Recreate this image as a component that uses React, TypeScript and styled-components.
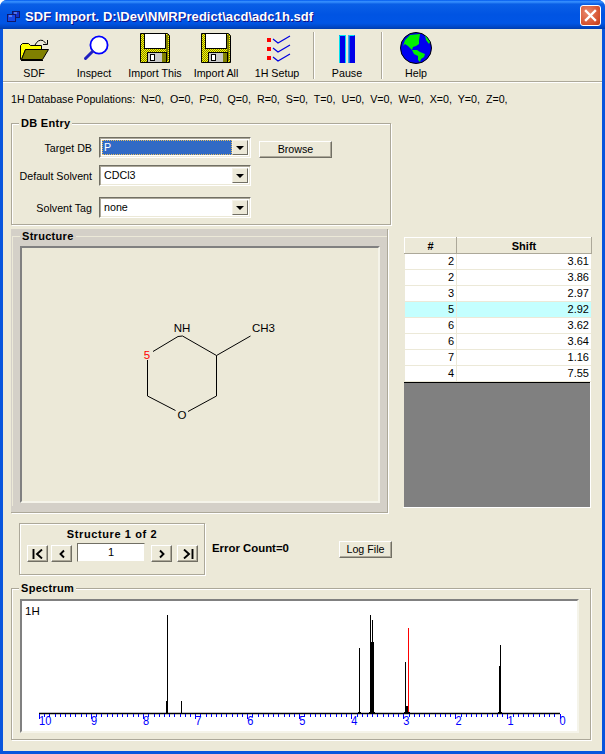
import React from 'react';
import styled, { createGlobalStyle } from 'styled-components';

const GlobalStyle = createGlobalStyle`
  html, body {
    margin: 0;
    padding: 0;
    background: #fff;
  }
  body {
    font-family: "Liberation Sans", Arial, sans-serif;
    font-size: 10.7px;
    color: #000;
  }
  * { box-sizing: border-box; }
`;

const rows = [
  { n: 2, shift: '3.61' },
  { n: 2, shift: '3.86' },
  { n: 3, shift: '2.97' },
  { n: 5, shift: '2.92', active: true },
  { n: 6, shift: '3.62' },
  { n: 6, shift: '3.64' },
  { n: 7, shift: '1.16' },
  { n: 4, shift: '7.55' },
];

const tools = [
  { label: 'SDF', icon: <FolderIcon />, width: 60 },
  { label: 'Inspect', icon: <LensIcon />, width: 60 },
  { label: 'Import This', icon: <DiskIcon />, width: 62 },
  { label: 'Import All', icon: <DiskIcon />, width: 60 },
  { label: '1H Setup', icon: <ChecksIcon />, width: 62 },
];

const ppmToX = (ppm: number) => 537.5 - ppm * 52.05;

export default function App() {
  return (
    <>
      <GlobalStyle />
      <Win>
        <TitleBar>
          <svg width="13" height="11" viewBox="0 0 13 11">
            <rect x="5.5" y="0.5" width="7" height="6" fill="#1030d0" stroke="#10186a" />
            <rect x="0.5" y="3.5" width="8" height="7" fill="#1848e8" stroke="#10186a" />
            <path d="M2 5h3M7 2h3" stroke="#9ab4f4" />
          </svg>
          <TitleText>SDF Import. D:\Dev\NMRPredict\acd\adc1h.sdf</TitleText>
          <CloseBtn>
            <svg width="13" height="13" viewBox="0 0 13 13">
              <path d="M2 2 L11 11 M11 2 L2 11" stroke="#fff" strokeWidth="2.4" strokeLinecap="square" />
            </svg>
          </CloseBtn>
        </TitleBar>
        <Client>
          <Toolbar>
            {tools.map((t) => (
              <ToolBtn key={t.label} $w={t.width}>
                {t.icon}
                <span>{t.label}</span>
              </ToolBtn>
            ))}
            <ToolSep $ml={5} />
            <ToolBtn $w={64}>
              <PauseIcon />
              <span>Pause</span>
            </ToolBtn>
            <ToolSep $ml={2} />
            <ToolBtn $w={66}>
              <GlobeIcon />
              <span>Help</span>
            </ToolBtn>
          </Toolbar>

          <PopLine>
            1H Database Populations:&nbsp; N=0,&nbsp; O=0,&nbsp; P=0,&nbsp; Q=0,&nbsp; R=0,&nbsp; S=0,&nbsp; T=0,&nbsp; U=0,&nbsp; V=0,&nbsp; W=0,&nbsp; X=0,&nbsp; Y=0,&nbsp; Z=0,
          </PopLine>

          <Upper>
            <LeftCol>
              <DbGroup>
                <Legend>DB Entry</Legend>
                <FormRow $mb={7}>
                  <FieldLabel>Target DB</FieldLabel>
                  <Combo>
                    <ComboValue $selected>P</ComboValue>
                    <ComboArrow />
                  </Combo>
                  <Browse>Browse</Browse>
                </FormRow>
                <FormRow $mb={11}>
                  <FieldLabel>Default Solvent</FieldLabel>
                  <Combo>
                    <ComboValue>CDCl3</ComboValue>
                    <ComboArrow />
                  </Combo>
                </FormRow>
                <FormRow $mb={0}>
                  <FieldLabel>Solvent Tag</FieldLabel>
                  <Combo>
                    <ComboValue>none</ComboValue>
                    <ComboArrow />
                  </Combo>
                </FormRow>
              </DbGroup>

              <StructFrame>
                <StructGroup>
                  <Legend $grey>Structure</Legend>
                  <StructPanel>
                    <svg width="356" height="253" viewBox="22 248 356 253">
                      <g stroke="#000" strokeWidth="1" fill="none">
                        <path d="M178 336.5 L182.5 336 L216.5 355.5 L216.5 396 L188 411.5" />
                        <path d="M216.5 355.5 L250.5 336" />
                        <path d="M175.5 410.5 L147.5 396 L147.5 360" />
                        <path d="M153 351.5 L178 336.5" />
                      </g>
                      <MolText x="182" y="332" textAnchor="middle">NH</MolText>
                      <MolText x="252" y="332">CH3</MolText>
                      <MolText x="182" y="419" textAnchor="middle">O</MolText>
                      <MolText x="147" y="359" textAnchor="middle" $red>5</MolText>
                    </svg>
                  </StructPanel>
                </StructGroup>
              </StructFrame>
            </LeftCol>

            <GridBox>
              <ShiftTable>
                <colgroup>
                  <col width="52" />
                  <col width="135" />
                </colgroup>
                <thead>
                  <tr>
                    <HeadCell>#</HeadCell>
                    <HeadCell>Shift</HeadCell>
                  </tr>
                </thead>
                <tbody>
                  {rows.map((r, i) => (
                    <BodyRow key={i} $active={r.active}>
                      <BodyCell>{r.n}</BodyCell>
                      <BodyCell>{r.shift}</BodyCell>
                    </BodyRow>
                  ))}
                </tbody>
              </ShiftTable>
              <GridEmpty />
            </GridBox>
          </Upper>

          <NavRow>
            <NavGroup>
              <NavTitle>Structure 1 of 2</NavTitle>
              <NavControls>
                <NavBtn $mr={3}>
                  <svg width="12" height="10" viewBox="0 0 12 10"><path d="M1.5 0V10M10 .5L5 5L10 9.5" stroke="#000" strokeWidth="1.9" fill="none" /></svg>
                </NavBtn>
                <NavBtn $mr={5}>
                  <svg width="12" height="10" viewBox="0 0 12 10"><path d="M8 1.5L4.5 5L8 8.5" stroke="#000" strokeWidth="1.9" fill="none" /></svg>
                </NavBtn>
                <NavInput>1</NavInput>
                <NavBtn $mr={5}>
                  <svg width="12" height="10" viewBox="0 0 12 10"><path d="M4 1.5L7.5 5L4 8.5" stroke="#000" strokeWidth="1.9" fill="none" /></svg>
                </NavBtn>
                <NavBtn $mr={0}>
                  <svg width="12" height="10" viewBox="0 0 12 10"><path d="M10.5 0V10M2 .5L7 5L2 9.5" stroke="#000" strokeWidth="1.9" fill="none" /></svg>
                </NavBtn>
              </NavControls>
            </NavGroup>
            <ErrorCount>Error Count=0</ErrorCount>
            <LogBtn>Log File</LogBtn>
          </NavRow>

          <SpecGroup>
            <Legend>Spectrum</Legend>
            <SpecPanel>
              <SpecChart />
            </SpecPanel>
          </SpecGroup>
        </Client>
      </Win>
    </>
  );
}

function SpecChart() {
  const ticks = [];
  for (let i = 0; i <= 100; i += 1) {
    const x = Math.round(ppmToX(i / 10)) + 0.5;
    ticks.push(<line key={i} x1={x} x2={x} y1={113} y2={i % 10 === 0 ? 118 : 116} stroke="#00f" />);
  }
  const labels = [10, 9, 8, 7, 6, 5, 4, 3, 2, 1, 0];
  // panel inner top-left sits at (22, 601) on the page
  const peaks: [number, number, string?][] = [
    [144.5, 100], [145.5, 14], [159.5, 100],
    [337.5, 47], [348.5, 14], [350.5, 19], [349.5, 41], [351.5, 41],
    [383.5, 61], [384.5, 105], [385.5, 105], [386.5, 27, '#f00'],
    [478.5, 44], [477.5, 65],
  ];
  return (
    <svg width="555" height="130" viewBox="0 0 555 130">
      <SpecLabel x="3" y="14">1H</SpecLabel>
      {peaks.map(([x, top, color], i) => (
        <line key={i} x1={x} x2={x} y1={top} y2={112} stroke={color ?? '#000'} />
      ))}
      <path d="M336 111.5h3M347 111.5h6M382 111.5h6M476 111.5h4" stroke="#000" />
      <line x1={17} x2={538} y1={112.5} y2={112.5} stroke="#000" strokeWidth="1.4" />
      {ticks}
      {labels.map((n) => (
        <AxisLabel key={n} transform={`translate(${ppmToX(n)},124) scale(0.85,1)`}>{n}</AxisLabel>
      ))}
    </svg>
  );
}

function FolderIcon() {
  return (
    <Ico viewBox="0 0 32 32">
      <path d="M2.5 27.5 V13.5 L4.5 11.5 H10.5 L12.5 13.5 H23.5 V17.5 H7.5 L3.5 27.5 Z" fill="#ffff00" stroke="#000" />
      <path d="M3.5 27.5 L7.5 17.5 H30.5 L24.5 27.5 Z" fill="#808000" stroke="#000" />
      <path d="M3 28.5 H25" stroke="#000" />
      <path d="M17 13 Q20 7 25 8.5 L28 11.5" stroke="#000" fill="none" />
      <path d="M29.5 8 V12.5 H25" stroke="#000" fill="none" />
    </Ico>
  );
}

function LensIcon() {
  return (
    <Ico viewBox="0 0 32 32">
      <circle cx="21" cy="13" r="8.6" fill="#fff" stroke="#0000ff" strokeWidth="1.8" />
      <path d="M14.5 19.5 L7.5 26.5" stroke="#2020c0" strokeWidth="3" strokeLinecap="round" />
    </Ico>
  );
}

function DiskIcon() {
  return (
    <Ico viewBox="0 0 32 32">
      <defs>
        <pattern id="dither" width="2" height="2" patternUnits="userSpaceOnUse">
          <rect width="2" height="2" fill="#ffff00" />
          <rect width="1" height="1" fill="#808000" />
          <rect x="1" y="1" width="1" height="1" fill="#808000" />
        </pattern>
      </defs>
      <path d="M1.5 1.5 H28.5 L30.5 3.5 V30.5 H1.5 Z" fill="url(#dither)" stroke="#000" />
      <rect x="5.5" y="1.5" width="21" height="15" fill="#fff" stroke="#000" />
      <rect x="27" y="3" width="2" height="26" fill="#808000" />
      <rect x="8.5" y="20.5" width="19" height="10" fill="#c8c8c8" stroke="#000" />
      <rect x="11.5" y="22.5" width="4" height="6" fill="#fff" stroke="#000" />
      <rect x="23" y="21" width="4" height="9" fill="#808000" />
    </Ico>
  );
}

function ChecksIcon() {
  const ys = [6, 15, 24];
  return (
    <Ico viewBox="0 0 32 32">
      {ys.map((y) => (
        <g key={y}>
          <rect x="6" y={y} width="4" height="4" fill="#f00" />
          <path d={`M12 ${y + 1} L17 ${y + 5} L29 ${y - 2}`} stroke="#0000e0" strokeWidth="1.2" fill="none" />
        </g>
      ))}
    </Ico>
  );
}

function PauseIcon() {
  return (
    <Ico viewBox="0 0 32 32">
      <rect x="8" y="3" width="6.5" height="28" fill="#0000e8" />
      <rect x="17.5" y="3" width="6.5" height="28" fill="#0000e8" />
      <path d="M8.5 31V3.5H14M14.5 3V31M18 31V3.5H23.5" stroke="#00e0f0" fill="none" />
    </Ico>
  );
}

function GlobeIcon() {
  return (
    <Ico viewBox="0 0 32 32">
      <circle cx="16" cy="16" r="15.5" fill="#0000f0" stroke="#000" />
      <path d="M3 14 L5 8 L10 3 L20 2 L19 8 L19 12 L16 14 L13 15 L12 18 L8 14 L5 12 Z" fill="#00f000" />
      <path d="M12 18 L17 18 L20 20 L25 22 L24 25 L21 27 L20 30 L18 28 L18 24 L14 22 Z" fill="#00f000" />
      <path d="M25 3 L30 10 L29 12 L26 8 Z" fill="#00f000" />
    </Ico>
  );
}

const Win = styled.div`
  width: 605px;
  height: 754px;
  background: #0855dd;
  padding: 0 3px 3px;
  border-radius: 7px 7px 0 0;
  overflow: hidden;
  display: flex;
  flex-direction: column;
`;

const TitleBar = styled.div`
  height: 29px;
  margin: 0 -3px;
  padding: 3px 4px 0 7px;
  flex: none;
  display: flex;
  align-items: center;
  background: linear-gradient(to bottom, #0058ee 0%, #3a93ff 6%, #0a5fe6 14%, #0054e3 50%, #0055e5 80%, #0048c8 92%, #003dae 100%);
`;

const TitleText = styled.div`
  flex: 1;
  margin-left: 5px;
  font-weight: bold;
  font-size: 13px;
  letter-spacing: 0.05px;
  color: #fff;
  text-shadow: 1px 1px 0 #0f1089;
  white-space: nowrap;
`;

const CloseBtn = styled.div`
  width: 21px;
  height: 21px;
  margin-top: -1px;
  display: flex;
  align-items: center;
  justify-content: center;
  border: 1px solid #fff;
  border-radius: 3px;
  background: radial-gradient(circle at 35% 35%, #e98a6f, #d5502c 70%, #b93a16);
`;

const Client = styled.div`
  flex: 1;
  background: #ece9d8;
  display: flex;
  flex-direction: column;
  min-height: 0;
`;

const Toolbar = styled.div`
  height: 53px;
  flex: none;
  display: flex;
  padding: 3px 0 0 1px;
  border-bottom: 1px solid #aca899;
  box-shadow: 0 1px 0 #fff;
`;

const ToolBtn = styled.div<{ $w: number }>`
  width: ${(p) => p.$w}px;
  flex: none;
  display: flex;
  flex-direction: column;
  align-items: center;
  white-space: nowrap;
  & > span { margin-top: 3px; line-height: 13px; }
`;

const Ico = styled.svg`
  width: 32px;
  height: 32px;
  flex: none;
  display: block;
`;

const ToolSep = styled.div<{ $ml: number }>`
  width: 2px;
  height: 47px;
  margin-left: ${(p) => p.$ml}px;
  flex: none;
  background: #aca899;
  border-right: 1px solid #fff;
`;

const PopLine = styled.div`
  height: 14px;
  flex: none;
  margin: 10px 0 0 8px;
  line-height: 14px;
  white-space: nowrap;
`;

const Upper = styled.div`
  flex: none;
  display: flex;
  margin: 17px 0 0 8px;
  gap: 12px;
`;

const LeftCol = styled.div`
  width: 380px;
  display: flex;
  flex-direction: column;
`;

const Legend = styled.div<{ $grey?: boolean }>`
  position: absolute;
  top: -7px;
  left: 7px;
  padding: 0 2px;
  font-size: 11px;
  font-weight: bold;
  letter-spacing: 0.3px;
  line-height: 13px;
  background: ${(p) => (p.$grey ? '#d4d0c8' : '#ece9d8')};
`;

const DbGroup = styled.div`
  position: relative;
  height: 102px;
  padding: 13px 0 0 0;
  border: 1px solid #aca899;
  box-shadow: 1px 1px 0 #fff, inset 1px 1px 0 #fff;
`;

const FormRow = styled.div<{ $mb: number }>`
  display: flex;
  align-items: center;
  margin-bottom: ${(p) => p.$mb}px;
`;

const FieldLabel = styled.div`
  width: 80px;
  margin-right: 7px;
  text-align: right;
  white-space: nowrap;
`;

const Combo = styled.div`
  width: 152px;
  height: 21px;
  display: flex;
  padding: 2px;
  background: #fff;
  border: 1px solid;
  border-color: #716f64 #fff #fff #716f64;
  box-shadow: inset 1px 1px 0 #aca899, inset -1px -1px 0 #ece9d8;
`;

const ComboValue = styled.div<{ $selected?: boolean }>`
  flex: 1;
  padding-left: 2px;
  line-height: 15px;
  color: ${(p) => (p.$selected ? '#fff' : '#000')};
  background: ${(p) => (p.$selected ? '#316ac5' : 'transparent')};
  outline: ${(p) => (p.$selected ? '1px dotted #e8c060' : 'none')};
  outline-offset: -1px;
`;

const ComboArrow = styled.div`
  width: 16px;
  flex: none;
  background: #ece9d8;
  border: 1px solid;
  border-color: #f4f2e8 #716f64 #716f64 #f4f2e8;
  position: relative;
  &::after {
    content: '';
    position: absolute;
    left: 3px;
    top: 5px;
    border: 4px solid transparent;
    border-top: 4px solid #000;
    border-bottom: 0;
  }
`;

const Browse = styled.div`
  width: 73px;
  height: 17px;
  margin: 3px 0 0 8px;
  line-height: 14px;
  text-align: center;
  background: #ece9d8;
  border: 1px solid;
  border-color: #fff #716f64 #716f64 #fff;
  box-shadow: inset -1px -1px 0 #aca899;
`;

const StructFrame = styled.div`
  margin-top: 4px;
  width: 377px;
  height: 284px;
  padding: 7px 0 0 1px;
  background: #d4d0c8;
  border-right: 1px solid #aca899;
  border-bottom: 1px solid #aca899;
  box-shadow: 1px 1px 0 #fff;
`;

const StructGroup = styled.div`
  position: relative;
  height: 270px;
  padding: 9px 6px 0 7px;
  border-top: 1px solid #ece9d8;
  border-left: 1px solid #ece9d8;
`;

const StructPanel = styled.div`
  height: 257px;
  width: 360px;
  background: #ece9d8;
  border: 2px solid;
  border-color: #808080 #f5f4ea #f5f4ea #808080;
`;

const MolText = styled.text<{ $red?: boolean }>`
  font-family: "Liberation Sans", Arial, sans-serif;
  font-size: 11.5px;
  fill: ${(p) => (p.$red ? '#f00' : '#000')};
`;

const GridBox = styled.div`
  margin-top: 114px;
  width: 188px;
  height: 271px;
  flex: none;
  display: flex;
  flex-direction: column;
  border-right: 1px solid #fff;
  border-bottom: 1px solid #fff;
`;

const ShiftTable = styled.table`
  width: 187px;
  flex: none;
  border-collapse: collapse;
  table-layout: fixed;
  margin-left: 1px;
`;

const HeadCell = styled.th`
  height: 16px;
  padding: 0;
  font-size: 11px;
  line-height: 14px;
  background: #ece9d8;
  border: 1px solid;
  border-color: #fff #aca899 #aca899 #fff;
`;

const BodyRow = styled.tr<{ $active?: boolean }>`
  background: ${(p) => (p.$active ? '#c4ffff' : '#fff')};
`;

const BodyCell = styled.td`
  height: 16px;
  padding: 0 2px 1px 0;
  font-size: 11px;
  line-height: 14px;
  text-align: right;
  border-right: 1px solid #ece9d8;
  border-bottom: 1px solid #ece9d8;
`;

const GridEmpty = styled.div`
  flex: 1;
  margin-left: 1px;
  background: #808080;
  border-top: 1px solid #000;
`;

const NavRow = styled.div`
  flex: none;
  display: flex;
  align-items: flex-start;
  margin: 10px 0 0 16px;
`;

const NavGroup = styled.div`
  width: 186px;
  height: 52px;
  padding: 4px 7px 0;
  border: 1px solid #aca899;
  box-shadow: 1px 1px 0 #fff, inset 1px 1px 0 #fff;
`;

const NavTitle = styled.div`
  text-align: center;
  font-size: 11px;
  font-weight: bold;
  letter-spacing: 0.6px;
  line-height: 13px;
`;

const NavControls = styled.div`
  display: flex;
  align-items: flex-start;
  margin-top: 4px;
`;

const NavBtn = styled.div<{ $mr: number }>`
  width: 21px;
  height: 17px;
  margin-right: ${(p) => p.$mr}px;
  flex: none;
  display: flex;
  align-items: center;
  justify-content: center;
  background: #ece9d8;
  border: 1px solid;
  border-color: #fff #716f64 #716f64 #fff;
  box-shadow: inset -1px -1px 0 #aca899;
`;

const NavInput = styled.div`
  width: 68px;
  height: 19px;
  margin: -2px 6px 0 0;
  flex: none;
  text-align: center;
  font-size: 11px;
  line-height: 17px;
  background: #fff;
  border: 1px solid;
  border-color: #716f64 #ece9d8 #ece9d8 #716f64;
`;

const ErrorCount = styled.div`
  width: 127px;
  margin: 18px 0 0 7px;
  font-size: 11.4px;
  font-weight: bold;
  line-height: 14px;
`;

const LogBtn = styled.div`
  width: 53px;
  height: 17px;
  margin-top: 18px;
  text-align: center;
  line-height: 14px;
  background: #ece9d8;
  border: 1px solid;
  border-color: #fff #716f64 #716f64 #fff;
  box-shadow: inset -1px -1px 0 #aca899;
`;

const SpecGroup = styled.div`
  position: relative;
  flex: none;
  width: 580px;
  height: 152px;
  margin: 13px 0 0 8px;
  padding: 10px 0 0 8px;
  border: 1px solid #aca899;
  box-shadow: 1px 1px 0 #fff, inset 1px 1px 0 #fff;
`;

const SpecPanel = styled.div`
  width: 559px;
  height: 134px;
  background: #fff;
  border: 2px solid;
  border-color: #808080 #f5f4ea #f5f4ea #808080;
  overflow: hidden;
`;

const SpecLabel = styled.text`
  font-family: "Liberation Sans", Arial, sans-serif;
  font-size: 11.5px;
  fill: #000;
`;

const AxisLabel = styled.text`
  font-family: "Liberation Sans", Arial, sans-serif;
  font-size: 13px;
  fill: #0000ff;
`;
